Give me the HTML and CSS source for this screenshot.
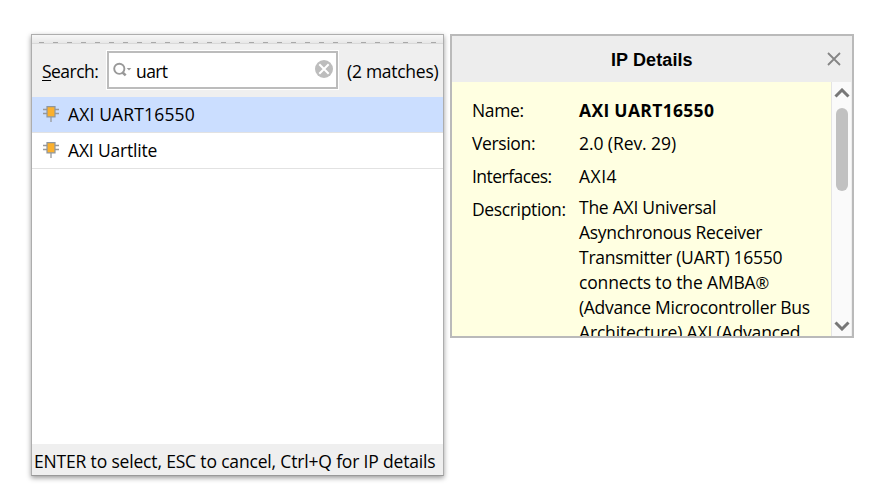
FILE: index.html
```html
<!DOCTYPE html>
<html lang="en">
<head>
<meta charset="utf-8">
<title>IP Catalog Search</title>
<link rel="stylesheet" href="styles.css">
</head>
<body>
<main class="stage">
  <section class="picker">
    <div class="grip"></div>
    <div class="search">
      <span class="search-label"><u>S</u>earch:</span>
      <div class="field">
        <svg class="lens" width="20" height="16" viewBox="0 0 20 16"><circle cx="6.3" cy="6.8" r="5.1" fill="none" stroke="#999" stroke-width="1.9"/><path d="M9.3 10.2l3.4 3.2" stroke="#999" stroke-width="2.6"/><path d="M13.7 6h4.6L16 8.5z" fill="#999"/></svg>
        <span class="query">uart</span>
        <svg class="clear" width="18" height="18" viewBox="0 0 18 18"><circle cx="9" cy="9" r="9" fill="#bdbdbd"/><path d="M4.3 4.3l9.4 9.4M13.7 4.3l-9.4 9.4" stroke="#fff" stroke-width="2"/></svg>
      </div>
      <span class="count">(2 matches)</span>
    </div>
    <div class="list">
      <div class="row selected">
        <svg class="chip" width="16" height="16" viewBox="0 0 16 16"><path d="M0 3.5h16M0 7.5h16M8 11v5" stroke="#999" stroke-width="1.3"/><path d="M4 .6h8v10.3H4z" fill="#fbb02d" stroke="#8f969d" stroke-width="1.2"/></svg>
        <span class="name-full">AXI UART16550</span>
      </div>
      <div class="row">
        <svg class="chip" width="16" height="16" viewBox="0 0 16 16"><path d="M0 3.5h16M0 7.5h16M8 11v5" stroke="#999" stroke-width="1.3"/><path d="M4 .6h8v10.3H4z" fill="#fbb02d" stroke="#8f969d" stroke-width="1.2"/></svg>
        <span class="name-lite">AXI Uartlite</span>
      </div>
    </div>
    <div class="hint">ENTER to select, ESC to cancel, Ctrl+Q for IP details</div>
  </section>

  <section class="details">
    <header class="title">
      <span>IP Details</span>
      <svg class="close" width="14" height="14" viewBox="0 0 14 14"><path d="M1 1l12 12M13 1L1 13" stroke="#858585" stroke-width="1.8"/></svg>
    </header>
    <div class="body">
      <dl class="facts">
        <dt>Name:</dt><dd class="core">AXI UART16550</dd>
        <dt>Version:</dt><dd class="revision">2.0 (Rev. 29)</dd>
        <dt class="interfaces">Interfaces:</dt><dd class="bus">AXI4</dd>
        <dt>Description:</dt>
        <dd class="description">
          <div>The AXI Universal</div>
          <div class="tight">Asynchronous Receiver</div>
          <div>Transmitter (UART) 16550</div>
          <div class="mark">connects to the AMBA<span class="reg">®</span></div>
          <div class="tight">(Advance Microcontroller Bus</div>
          <div class="loose">Architecture) AXI (Advanced</div>
        </dd>
      </dl>
      <div class="scrollbar">
        <svg width="16" height="10" viewBox="0 0 16 10"><path d="M1.5 8.5L8 2l6.5 6.5" fill="none" stroke="#777" stroke-width="3"/></svg>
        <div class="thumb"></div>
        <svg width="16" height="10" viewBox="0 0 16 10"><path d="M1.5 1.5L8 8l6.5-6.5" fill="none" stroke="#777" stroke-width="3"/></svg>
      </div>
    </div>
  </section>
</main>
</body>
</html>
```
FILE: styles.css
```css
* { box-sizing: border-box; }
body {
  margin: 0;
  background: #fff;
  color: #000;
  font: 17.5px/24px "Open Sans", "Noto Sans", sans-serif;
}
.stage {
  display: flex;
  align-items: flex-start;
  gap: 6px;
  width: 876px;
  height: 504px;
  padding: 34px 0 0 31px;
  overflow: hidden;
  white-space: nowrap;
}
.picker {
  display: flex;
  flex-direction: column;
  width: 413px;
  height: 442px;
  border: 1px solid #adadad;
  border-bottom-color: #999;
  background: #fff;
  box-shadow: 0 2px 5px rgba(0, 0, 0, .4);
}
.grip {
  height: 9px;
  flex: none;
  border-bottom: 1px solid #d9d9d9;
  background:
    repeating-linear-gradient(90deg, #a8a8a8 0 5px, transparent 5px 14px) 7px 7px / 100% 1px no-repeat,
    linear-gradient(#f7f7f7, #e7e7e7);
}
.search {
  display: flex;
  align-items: center;
  height: 53px;
  flex: none;
  padding-left: 10px;
  background: #efefef;
}
.search-label { width: 65px; letter-spacing: -.53px; }
.search-label u { text-underline-offset: 2px; text-decoration-thickness: 1px; }
.field {
  display: flex;
  align-items: center;
  width: 231px;
  height: 38px;
  margin-top: -1px;
  padding: 2px 3px 0 4px;
  border: 2px solid #bcbcbc;
  outline: 1px solid #fff;
  background: #fff;
}
.lens { margin: -3px 3px 0 0; }
.query { flex: 1; letter-spacing: -.6px; }
.clear { margin-top: -4px; }
.count { margin-left: 9px; letter-spacing: -.27px; }
.list { flex: 1; }
.row {
  display: flex;
  align-items: center;
  height: 36px;
  padding: 0 0 2px 11px;
  border-bottom: 1px solid #e2e2e2;
}
.row.selected { background: #cbdeff; }
.chip { margin: 1px 9px 0 0; }
.name-full { letter-spacing: .15px; }
.name-lite { letter-spacing: -.18px; }
.hint {
  height: 31px;
  padding: 5px 0 0 2px;
  background: #efefef;
  letter-spacing: -.17px;
}
.details {
  width: 404px;
  height: 304px;
  border: 2px solid #bababa;
}
.title {
  display: flex;
  align-items: center;
  height: 46px;
  padding: 2px 11px 0 159px;
  background: #ededed;
  font: bold 18px/22px "Liberation Sans", sans-serif;
  letter-spacing: .1px;
}
.close { margin: -3px 0 0 auto; }
.body {
  display: flex;
  height: 254px;
  overflow: hidden;
  background: #ffffe1;
}
.facts {
  display: grid;
  grid-template-columns: 107px 1fr;
  grid-template-rows: 33px 33px 33px auto;
  flex: 1;
  height: 254px;
  margin: 0;
  padding: 16px 0 0 20px;
  overflow: hidden;
}
.facts dt { letter-spacing: -.36px; }
.facts dt.interfaces { letter-spacing: -.54px; }
.facts dd { margin: 0; }
.core { font-weight: bold; letter-spacing: .32px; }
.revision { letter-spacing: -.08px; }
.bus { letter-spacing: .5px; }
.facts .description { margin-top: -2px; line-height: 25px; letter-spacing: -.25px; }
.description .tight { letter-spacing: -.31px; }
.description .loose { letter-spacing: -.16px; }
.description .mark { letter-spacing: -.15px; }
.reg { font-size: 16.5px; }
.scrollbar {
  display: flex;
  flex-direction: column;
  align-items: center;
  width: 21px;
  padding: 6px 0 5px 1px;
  border-left: 1px solid #e4e4e4;
  border-right: 1px solid #eee;
  background: #fafafa;
}
.thumb {
  width: 12px;
  height: 83px;
  margin: 10px 0 auto;
  border-radius: 6px;
  background: #c1c1c1;
}
```
